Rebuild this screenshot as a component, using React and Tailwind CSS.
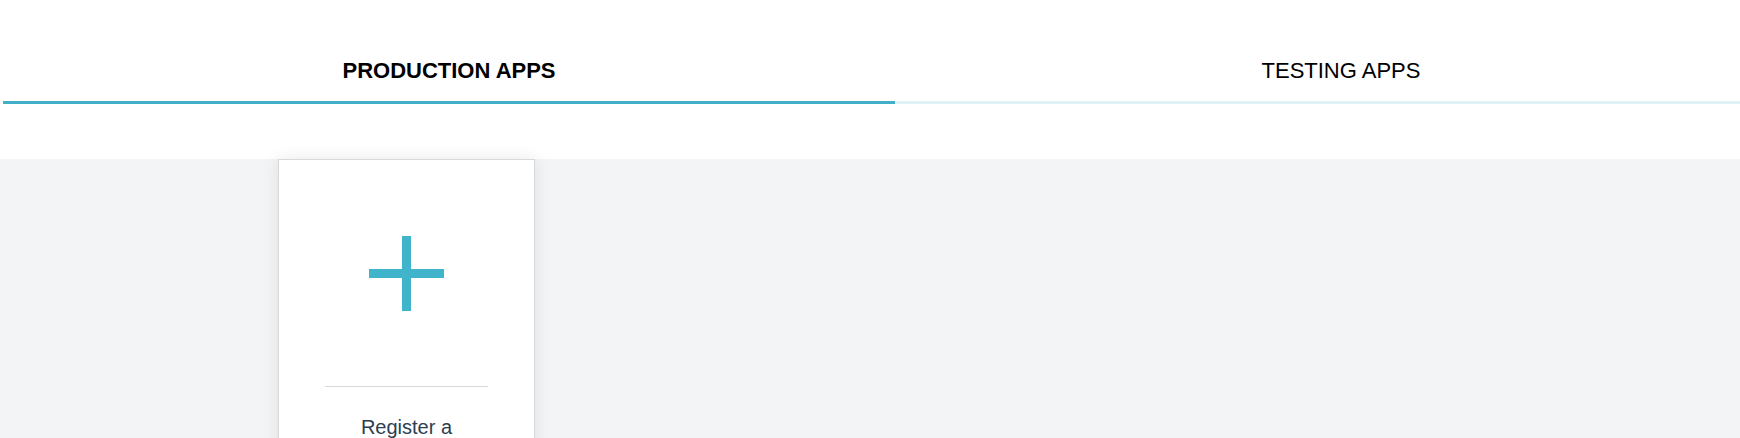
import React, { useState } from "react";

const tabs = [
  { id: "production", name: "PRODUCTION APPS" },
  { id: "testing", name: "TESTING APPS" },
];

const PlusIcon = () => (
  <svg width="75" height="75" viewBox="0 0 75 75">
    <rect x="33" y="0" width="9" height="75" fill="#3fb4ca" />
    <rect x="0" y="33" width="75" height="9" fill="#3fb4ca" />
  </svg>
);

export default function App() {
  const [activeTab, setActiveTab] = useState("production");

  return (
    <div
      className="h-[438px] w-full overflow-hidden bg-white"
      style={{ fontFamily: '"Liberation Sans", Arial, sans-serif' }}
    >
      {/* Tabs */}
      <div className="ml-[3px] flex w-[1784px]">
        {tabs.map((tab) => (
          <button
            key={tab.id}
            onClick={() => setActiveTab(tab.id)}
            className={`flex-1 pt-[58px] pb-[17px] text-[22px] leading-[26px] text-black border-b-[3px] ${
              activeTab === tab.id
                ? "font-bold border-[#41b0c7]"
                : "font-normal border-[#dff2f5]"
            }`}
          >
            {tab.name}
          </button>
        ))}
      </div>

      {/* Apps area */}
      <div className="mt-[56px] h-[300px] bg-[#f3f4f6]">
        <div className="ml-[278px] -mt-px flex w-[257px] flex-col items-center border border-[#d9d9d9] bg-white pb-8 shadow-[0_0_16px_rgba(0,0,0,0.09)]">
          <div className="mt-[76px]">
            <PlusIcon />
          </div>
          <div className="mt-[75px] h-px w-[163px] bg-[#d3d9dc]" />
          <p className="mt-[28px] max-w-[110px] text-center text-[20px] leading-[24px] text-[#2c3e50]">
            Register a new application
          </p>
        </div>
      </div>
    </div>
  );
}
